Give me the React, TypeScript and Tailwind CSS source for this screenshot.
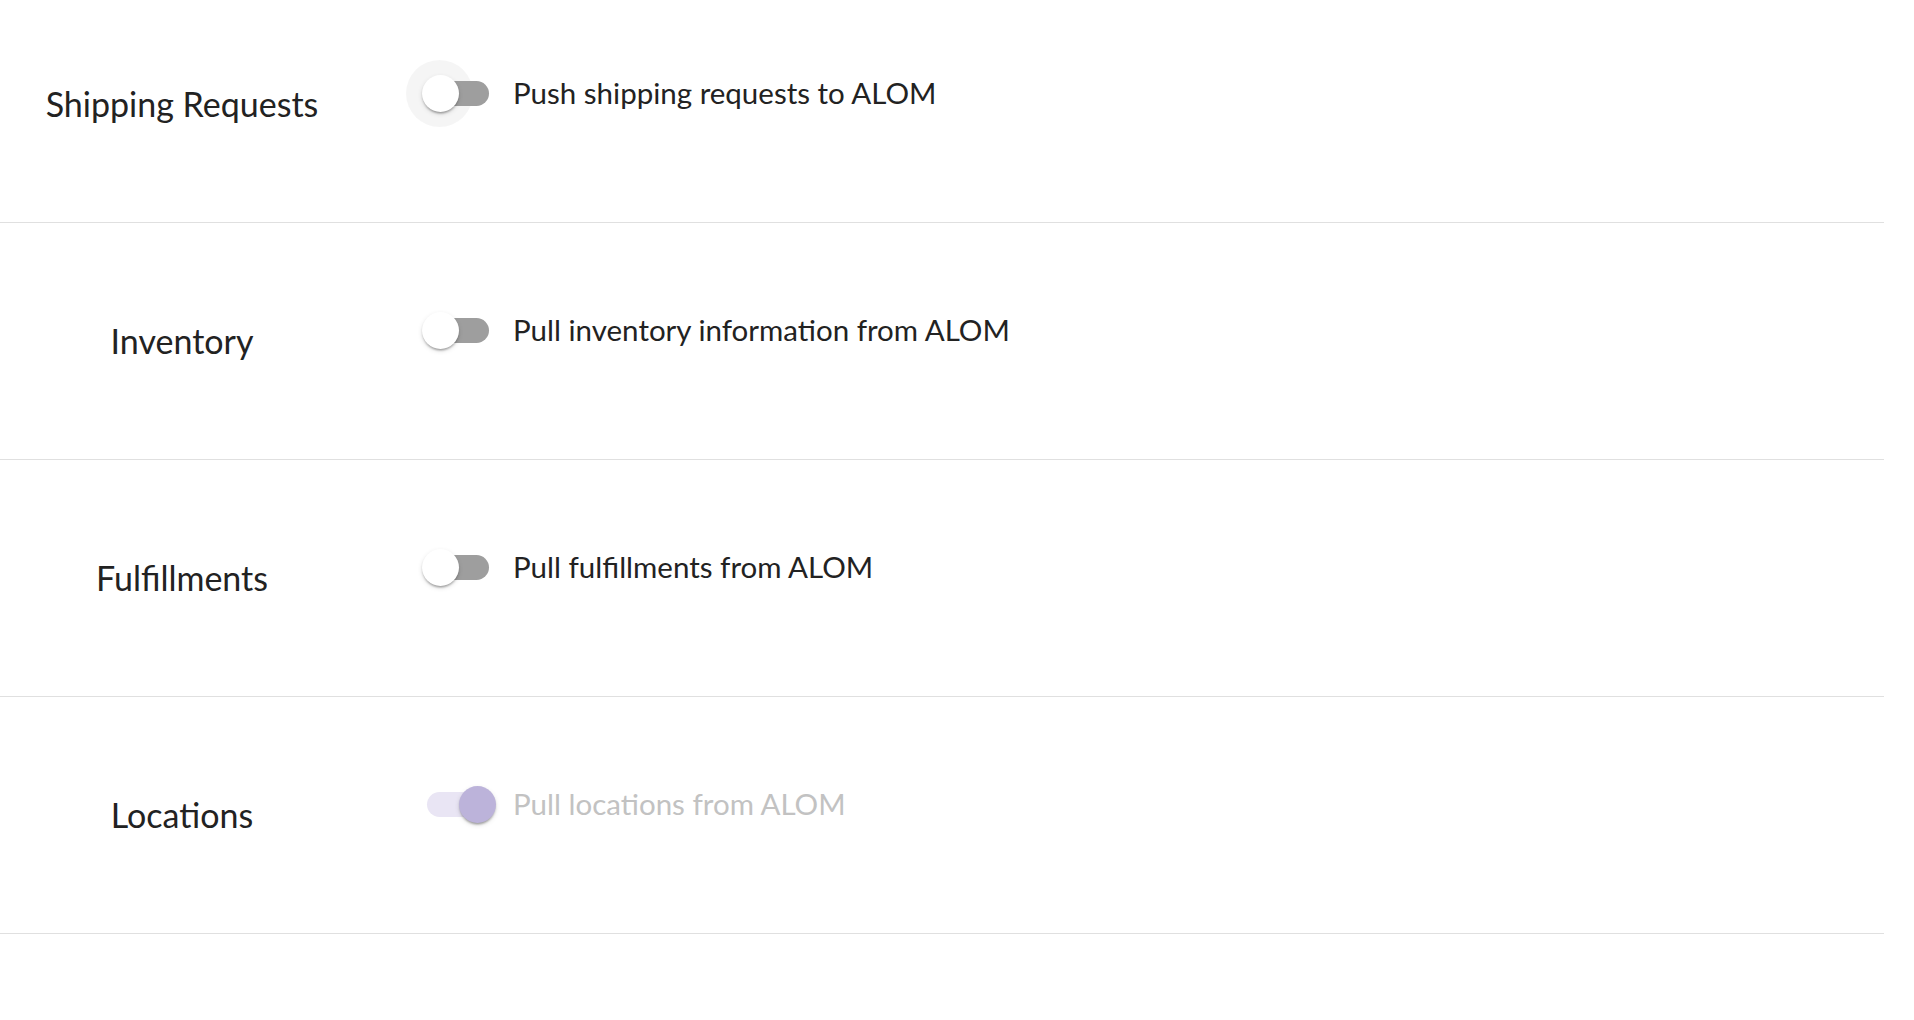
import React from "react";

type Row = { label: string; desc: string; checked?: boolean; disabled?: boolean; halo?: boolean };

const rows: Row[] = [
  { label: "Shipping Requests", desc: "Push shipping requests to ALOM", halo: true },
  { label: "Inventory", desc: "Pull inventory information from ALOM" },
  { label: "Fulfillments", desc: "Pull fulfillments from ALOM" },
  { label: "Locations", desc: "Pull locations from ALOM", checked: true, disabled: true },
];

function Switch({ checked, disabled, halo }: { checked?: boolean; disabled?: boolean; halo?: boolean }) {
  return (
    <div className="relative w-[107px] h-[67px] shrink-0" aria-disabled={disabled}>
      {halo && <div className="absolute left-0 top-0 w-[67px] h-[67px] rounded-full bg-[rgba(0,0,0,0.04)]" />}
      <div
        className={
          "absolute left-[21px] top-[21px] w-[62px] h-[25px] rounded-full " +
          (checked ? "bg-[#e9e5f4]" : "bg-[#9e9e9e]")
        }
      />
      <div
        className={
          "absolute top-[15px] w-[37px] h-[37px] rounded-full shadow-[0_3px_2px_-2px_rgba(0,0,0,0.2),0_2px_2px_0_rgba(0,0,0,0.14),0_2px_5px_0_rgba(0,0,0,0.12)] " +
          (checked ? "left-[53px] bg-[#bcb3da]" : "left-[16px] bg-white")
        }
      />
    </div>
  );
}

export default function App() {
  return (
    <div className="w-[1914px] h-[1020px] overflow-hidden bg-white" style={{ fontFamily: "Lato, 'Noto Sans', sans-serif" }}>
      <div className="w-[1884px] -mt-[14px]">
        {rows.map((r) => (
          <div key={r.label} className="flex items-center h-[237px] border-b border-[#e0e0e0]">
            <div className="w-[364px] shrink-0 text-center text-[34px] text-[#222222] leading-none">{r.label}</div>
            <div className="flex items-center ml-[42px] mb-[22px]">
              <Switch checked={r.checked} disabled={r.disabled} halo={r.halo} />
              <span className={"text-[29.5px] leading-none " + (r.disabled ? "text-[#c2c2c2]" : "text-[#222222]")}>
                {r.desc}
              </span>
            </div>
          </div>
        ))}
      </div>
    </div>
  );
}
